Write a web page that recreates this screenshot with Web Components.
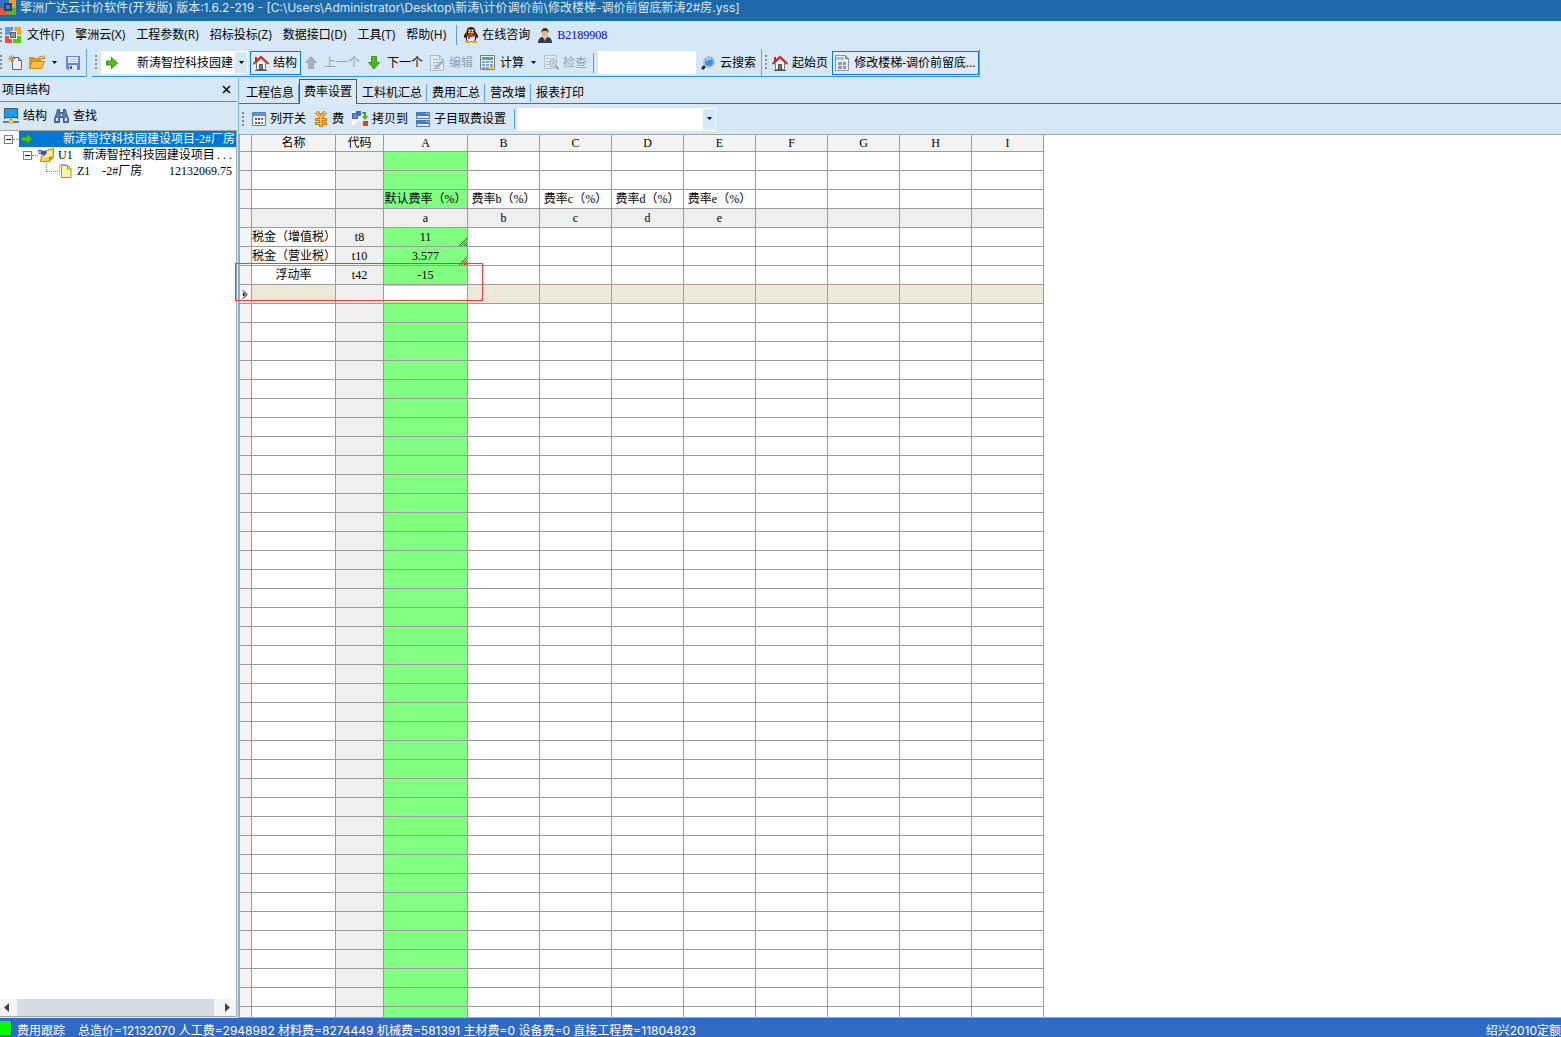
<!DOCTYPE html>
<html lang="zh-CN">
<head>
<meta charset="utf-8">
<title>擎洲广达云计价软件</title>
<style>
html,body{margin:0;height:100%;overflow:hidden}
body{font:12px/16px "Open Sans","Noto Sans CJK SC",sans-serif;color:#000;background:#d6e7f5}
</style>
</head>
<body>
<cost-app></cost-app>
<script>
const ICONS = {
  logo: [16,16,'<path fill="#fff" d="M3 3h10v10H3z"/><path fill="#5b9cf0" d="M0 0h8v4H5v4H0z"/><path fill="#f9a52c" d="M9 0h7v8h-4V4H9z"/><path fill="#e8533c" d="M0 9h4v3h3v4H0z"/><path fill="#55c41e" d="M12 9h4v7H8v-4h4z"/><path fill="#56606c" d="M5 5h6v6H5z"/><path fill="#8b939c" d="M6 6h4v4H6z"/>'],
  logoDark: [16,16,'<path fill="#2b74c9" d="M0 0h9v3H5v5H0z"/><path fill="#f39a2c" d="M9 0h7v8h-5V3H9z"/><path fill="#e8533c" d="M0 8h5v3h2v4H0z"/><path fill="#5fb31e" d="M11 8h5v7H7v-4h4z"/><path fill="#1b4674" d="M4 3h8v8H4z"/><path fill="#2f86cf" d="M6 5h4v4H6z"/>'],
  newFile: [15,16,'<path fill="#e8f0f8" stroke="#596a80" d="M4.500 2.500h6l3 3v9h-9z"/><path fill="none" stroke="#596a80" d="M10.500 2.500v3h3"/><path stroke="#f08a1c" d="M3.500 0v7M0 3.500h7M1 1l5 5M6 1L1 6"/>'],
  open: [16,16,'<path fill="#d99a1e" d="M0 2h5l1 1h6v4H3L1 14H0z"/><path fill="#fcc23f" stroke="#d08c10" d="M3.500 6.500h12l-3 7H.5z"/><path fill="none" stroke="#c47a15" d="M9.500 3c1-2 3-2 4.500-1M15.500.5v3h-3"/>'],
  save: [14,14,'<path fill="#6b85cf" d="M0 0h14v14H2l-2-2z"/><path fill="#e6edfa" d="M2 1h10v6H2z"/><path fill="#b7c6ea" d="M3 3h8v1H3zM3 5h8v1H3z"/><path fill="#dfe6f5" d="M3 9h8v5H3z"/><path fill="#3c55a5" d="M4 10h2v3H4z"/>'],
  arrowR: [12,12,'<path fill="#58bd1c" stroke="#2f8d12" d="M.5 4h5V.5l6 5.500-6 5.500V8h-5z"/>'],
  arrowD: [16,14,'<path fill="#4fb51f" stroke="#3e9a18" d="M4.500.5h5v6h3L7 13 1.500 6.500h3z"/>'],
  arrowU: [16,14,'<path fill="#a5b2bf" stroke="#9caab8" d="M4.500 12.500h5v-6h3L7 .5 1.500 6.500h3z"/>'],
  house: [16,16,'<path fill="#f6f6f6" stroke="#777" d="M3.500 7.500L8 3.500l4.500 4v7h-9z"/><path fill="#7b7f88" stroke="#4b4f58" d="M6.500 9.500h3v5h-3z"/><path fill="#b12a22" d="M2 2h2v4H2z"/><path fill="none" stroke="#c92c25" stroke-width="2" d="M.5 9L8 1.800 15.500 9"/><path stroke="#555" d="M2 15.500h12"/>'],
  edit: [15,16,'<path fill="#e3ebf2" stroke="#a9b8c6" d="M.5.5h9l4 4v11H.5z"/><path fill="none" stroke="#a9b8c6" d="M9.500.5v4h4M3 4.500h5M3 7.500h7M3 10.500h4M3 13.500h7"/><path stroke="#96a7b8" stroke-width="2" d="M13 6l-6 6"/><path stroke="#8797a8" d="M7 12l-2 1"/>'],
  calc: [16,15,'<path fill="#f3f7fb" stroke="#6d7f92" d="M.5.5h14v14H.5z"/><path fill="#58a886" d="M2 2h11v3H2z"/><path fill="#78a2dc" d="M2 6h3v2H2zM6 6h3v2H6zM10 6h3v2h-3zM2 9h3v2H2zM6 9h3v2H6zM10 9h3v2h-3zM2 12h3v2H2zM6 12h3v2H6z"/><path fill="#f0b030" d="M10 11h3v3h-3z"/>'],
  check: [15,15,'<path fill="#e1e9f0" stroke="#b4c2ce" d="M.5.5h12v13H.5z"/><path stroke="#b4c2ce" d="M2 3.500h9M2 6.500h4M2 9.500h3"/><circle cx="9" cy="8.500" r="3.500" fill="#d3dde6" stroke="#9fafbd"/><circle cx="9" cy="8.500" r="1.500" fill="#b4c2ce"/><path stroke="#93a4b4" stroke-width="2" d="M11.500 11l3 3"/>'],
  search: [15,14,'<path stroke="#222b33" stroke-width="3" d="M1 13l4-4"/><circle cx="8" cy="6" r="5" fill="#2f96e2" stroke="#b4bdc6" stroke-width="2"/><path fill="#8ed0fb" d="M4.500 5.500a3.500 3.500 0 0 1 6.500-2c-2 .2-4 .8-6.500 2z"/>'],
  doc: [15,16,'<path fill="#edf3fa" stroke="#8a94a8" d="M.5.5h10l3 3v12H.5z"/><path fill="#9cc4ee" d="M1 2h8v3H1z"/><path fill="none" stroke="#6f7690" d="M10.500.5v3h3"/><path fill="#9295b8" d="M3 7h4v3H3zM8 7h3v3H8zM3 11h4v3H3zM8 11h3v3H8z"/>'],
  qq: [16,16,'<path fill="#1c1c1e" d="M8 0c3 0 4.500 2 4.500 5 2 2 3 4 2.500 6l-1.500-1c0 3-2 5-5.500 5s-5.500-2-5.500-5L1 11c-.5-2 .5-4 2.500-6C3.500 2 5 0 8 0z"/><ellipse cx="8" cy="11" rx="4" ry="3.500" fill="#fff"/><path fill="#fff" d="M5.500 2.500h2v2h-2zM8.500 2.500h2v2h-2z"/><path fill="#f7a51b" d="M5 5h6v1.500H5zM2 14h5v2H2zM9 14h5v2H9z"/><path fill="#df2b20" d="M3 7c3 1.300 7 1.300 10 0v1.700c-2 1-4 1.200-6 1.200V12H5V9L3 8.500z"/>'],
  person: [14,15,'<path fill="#333a4a" d="M0 15c0-4 2-5.500 4-6h6c2 .5 4 2 4 6z"/><path fill="#fff" d="M5 9h4l-2 4z"/><path fill="#a04030" d="M6.500 10h1v4h-1z"/><ellipse cx="7" cy="5.500" rx="3" ry="4" fill="#ecb489"/><path fill="#51321f" d="M3.500 5C3 2 5 0 7 0s4 2 3.500 5L9 3H5z"/>'],
  monitor: [16,16,'<path fill="#4a5a6b" d="M1 0h14v11H1z"/><path fill="#1e9bf0" d="M2 1h12v8H2z"/><path fill="#b9c6d2" d="M2 10h12v1H2z"/><path fill="#6b7e90" d="M7 11h2v2H7zM0 13h16v2H0z"/><path fill="#e9b92f" d="M6 12h4v4H6z"/><path fill="#fbe28a" d="M7 13h2v2H7z"/>'],
  find: [15,14,'<path fill="#5c7ba6" stroke="#3c5680" d="M3.500.5h2v3h4v-3h2l1 4 2 5v4h-5v-5h-4v5h-5v-4l2-5z"/><path fill="#d6e7f5" d="M2 9h2v3H2zM11 9h2v3h-2zM7 5h1v2H7z"/>'],
  note: [17,14,'<path fill="#f5d45b" stroke="#b58a1b" d="M4.500 3.500l11-3v9l-4 4h-9z"/><path fill="#fff0a0" d="M6 5l8-2v4l-8 3z"/><path fill="#b1881c" d="M11 13V9h4z"/><path fill="#2857b8" d="M0 2h3l2 1h3l1 2-3 3-2-2H1z"/><path fill="#9bc2ff" d="M1 3h2v2H1z"/>'],
  pages: [13,14,'<path fill="none" stroke="#4d8dbd" stroke-dasharray="1 1" d="M7.500.5h-7v10"/><path fill="#fff7a8" stroke="#b48c1c" d="M2.500 1.500h6l3.500 3.500v8.500H2.500z"/><path fill="none" stroke="#b48c1c" d="M8.500 1.500V5H12"/>'],
  columns: [14,14,'<path fill="#f6faff" stroke="#5283c6" d="M.5.5h13v13H.5z"/><path fill="#5e91d6" d="M1 1h12v3H1z"/><path fill="#7c3fae" d="M3 6h2v2H3z"/><path fill="#2c4fba" d="M6 6h2v2H6zM6 10h2v2H6z"/><path fill="#d03b2c" d="M9 6h2v2H9zM3 10h2v2H3z"/><path fill="#3098d8" d="M9 10h2v2H9z"/>'],
  yen: [14,16,'<path fill="none" stroke="#c47818" stroke-width="4" d="M2.500 1L7 6l4.500-5M7 6v10"/><path stroke="#c47818" stroke-width="3" d="M1 8.500h12M1 12.500h12"/><path fill="none" stroke="#fbb84a" stroke-width="2" d="M2.500 1L7 6.500 11.500 1M7 6v9"/><path stroke="#fbb84a" d="M2 8.500h10M2 12.500h10"/>'],
  copyTo: [16,16,'<path fill="#fff" d="M0 0h11v10H6L0 15z"/><path fill="#3f6cd0" d="M4 0h5v5H4z"/><path fill="#5f8ce8" stroke="#2f58b8" d="M.5 2.500h5v5h-5z"/><path fill="#4aa52c" d="M10 1h4v4h2l-3 4-3-4h2V3h-2z"/><path fill="#d8432a" d="M11 10h5v5h-5z"/>'],
  panels: [14,15,'<path fill="#4a7ac6" d="M0 0h14v7H0zM0 8h14v7H0z"/><path fill="#dfe9f7" d="M1 4h12v2H1zM1 12h12v2H1z"/><path fill="#fff" d="M10 1h1v1h-1zM12 1h1v1h-1zM10 9h1v1h-1zM12 9h1v1h-1z"/>'],
  down: [7,4,'<path d="M1 0h5L3.500 3z"/>'],
  close: [9,9,'<path stroke="#000" stroke-width="1.500" d="M1 1l7 7M8 1L1 8"/>'],
  tri: [5,9,'<path fill="#444" d="M5 0v9L0 4.500z"/>'],
  triR: [5,9,'<path fill="#444" d="M0 0v9l5-4.500z"/>'],
  current: [6,9,'<path fill="none" stroke="#000" d="M1 .5l4 4-4 4M1.500 3v3l1.500-1.500z"/>'],
  hatch: [8,8,'<path stroke="currentColor" d="M0 8l8-8M2.500 8L8 2.500M5 8l3-3M7 8l1-1"/>']
};

/* Defines an element whose shadow root is stamped from one template. */
function define(name, html, setup) {
  const t = document.createElement('template');
  t.innerHTML = html;
  customElements.define(name, class extends HTMLElement {
    connectedCallback() {
      if (this.shadowRoot) return;
      this.attachShadow({mode:'open'}).append(t.content.cloneNode(true));
      if (setup) setup.call(this, this.shadowRoot);
    }
  });
}

define('ui-icon', '<style>:host{display:block;flex:none}svg{display:block}</style>', function (r) {
  const [w,h,body] = ICONS[this.getAttribute('name')];
  r.innerHTML += `<svg width="${w}" height="${h}" viewBox="0 0 ${w} ${h}" aria-hidden="true">${body}</svg>`;
});

define('ui-grip', `<style>:host{display:block;flex:none;width:2px;height:15px;background:repeating-linear-gradient(#8b8b8b 0 2px,transparent 2px 4px)}</style>`);

define('ui-sep', `<style>:host{display:block;flex:none;width:1px;height:20px;background:#5aa0d8}</style>`);

define('tool-button', `<style>
:host{display:block;flex:none}
button{all:unset;box-sizing:border-box;display:flex;align-items:center;gap:4px;height:24px;white-space:nowrap;color:#000}
:host([boxed]) button{border:1px solid #0a78d6;background:#e0ebf6;padding:0 3px 0 2px}
:host([off]) button{color:#8fa3b5}
</style><button><slot name="icon"></slot><slot></slot></button>`, function (r) {
  const b = r.querySelector('button');
  b.disabled = this.hasAttribute('off');
  if (this.hasAttribute('label')) b.setAttribute('aria-label', this.getAttribute('label'));
});

define('combo-box', `<style>
:host{display:flex;flex:none;align-items:center;box-sizing:border-box;height:23px;background:#fff;position:relative}
select{appearance:none;border:0;margin:0;background:none;font:inherit;color:#000;flex:1;min-width:0;height:23px;padding:0 14px 0 36px;border-radius:0}
.drop{display:grid;place-items:center;position:absolute;right:1px;top:1px;bottom:1px;width:12px;background:#d6e7f5;pointer-events:none}
.lead{position:absolute;left:5px}
</style><span class="lead"><slot></slot></span><select><option></option></select><span class="drop"><ui-icon name="down"></ui-icon></span>`, function (r) {
  r.querySelector('option').textContent = this.getAttribute('value') || '';
  r.querySelector('select').setAttribute('aria-label', this.getAttribute('label'));
});

define('title-bar', `<style>
:host{display:flex;gap:4px;height:21px;background:#1e6aa8;color:#dbe8f4;overflow:hidden;white-space:pre;flex:none;font-family:Inter,"Noto Sans CJK SC",sans-serif}
span{line-height:16px}
</style><ui-icon name="logoDark"></ui-icon><span>擎洲广达云计价软件(开发版) 版本:1.6.2-219 - [C:\\Users\\Administrator\\Desktop\\新涛\\计价调价前\\修改楼梯-调价前留底新涛2#房.yss]</span>`);

define('menu-bar', `<style>
:host{display:flex;align-items:center;height:28px;flex:none}
nav{display:flex;gap:11px;margin:0 10px 0 6px}
button{all:unset;white-space:nowrap}
ui-grip{margin-right:3px}
.chat{margin:0 8px 0 6px;display:flex;gap:3px;align-items:center}
.user{display:flex;gap:5px;align-items:center}
a{color:#00f;text-decoration:none;font-family:"Liberation Serif",serif}
</style><ui-grip></ui-grip><ui-icon name="logo"></ui-icon>
<nav><button>文件(F)</button><button>擎洲云(X)</button><button>工程参数(R)</button><button>招标投标(Z)</button><button>数据接口(D)</button><button>工具(T)</button><button>帮助(H)</button></nav>
<ui-sep></ui-sep><button class="chat"><ui-icon name="qq"></ui-icon>在线咨询</button>
<span class="user"><ui-icon name="person"></ui-icon><a href="#">B2189908</a></span>`);

define('tool-strip', `<style>
:host{display:flex;align-items:center;height:28px;flex:none}
.band{display:flex;align-items:center;height:28px;border-bottom:1px solid #2f8fdc;border-right:1px solid #5aa8e4;box-sizing:border-box}
.a{gap:6px;padding-right:6px}
.a .save{margin-left:2px}
.b{margin-left:5px;padding:0 5px 0 3px}
.b>*{margin-right:7px}
.b ui-grip{margin-right:4px}
.c ui-grip{margin-right:5px}
.b combo-box{width:147px;margin-right:2px}
.b .home{margin-right:3px}
.b .tight{margin-right:6px}
.b ui-sep{margin-right:4px}
input{all:unset;width:98px;height:23px;background:#fff;margin-right:5px!important}
.b .last{margin-right:0}
.c{padding-left:3px}.c .page{margin-right:4px}
</style>
<div class="band a"><ui-grip></ui-grip><tool-button label="新建"><ui-icon slot="icon" name="newFile"></ui-icon></tool-button><tool-button label="打开"><ui-icon slot="icon" name="open"></ui-icon></tool-button><ui-icon name="down"></ui-icon><tool-button class="save" label="保存"><ui-icon slot="icon" name="save"></ui-icon></tool-button></div>
<div class="band b"><ui-grip></ui-grip><combo-box label="工程" value="新涛智控科技园建"><ui-icon name="arrowR"></ui-icon></combo-box>
<tool-button class="home" boxed><ui-icon slot="icon" name="house"></ui-icon>结构</tool-button>
<tool-button off><ui-icon slot="icon" name="arrowU"></ui-icon>上一个</tool-button>
<tool-button><ui-icon slot="icon" name="arrowD"></ui-icon>下一个</tool-button>
<tool-button off><ui-icon slot="icon" name="edit"></ui-icon>编辑</tool-button>
<tool-button class="tight"><ui-icon slot="icon" name="calc"></ui-icon>计算</tool-button><ui-icon name="down"></ui-icon>
<tool-button off class="tight"><ui-icon slot="icon" name="check"></ui-icon>检查</tool-button>
<ui-sep></ui-sep><input aria-label="搜索内容"><tool-button class="last"><ui-icon slot="icon" name="search"></ui-icon>云搜索</tool-button></div>
<div class="band c"><ui-grip></ui-grip><tool-button class="page"><ui-icon slot="icon" name="house"></ui-icon>起始页</tool-button>
<tool-button boxed><ui-icon slot="icon" name="doc"></ui-icon>修改楼梯-调价前留底...</tool-button></div>`);

define('project-tree', `<style>
:host{display:flex;flex-direction:column;flex:1;min-height:0;background:#fff;border:1px solid #a9a79b;border-left:0;box-sizing:border-box;font-family:"Liberation Serif","Noto Sans CJK SC",serif}
ul{list-style:none;margin:0;padding:0;flex:1;overflow:hidden}
li{display:flex;align-items:center;height:16px;white-space:pre}
.t{flex:1;display:flex;align-items:center;height:16px;min-width:0;overflow:hidden}
.sel{background:#0078d7;color:#fff;height:16px}
.box{flex:none;width:7px;height:7px;border:1px solid #808080;background:linear-gradient(#000,#000) center/5px 1px no-repeat}
.dots{flex:none;height:0;border-top:1px dotted #888}
.elbow{flex:none;width:11px;height:8px;align-self:flex-start;border-left:1px dotted #888;border-bottom:1px dotted #888}
.bar{display:flex;align-items:center;height:17px;background:#f4f5f7;justify-content:space-between;padding:0 6px 0 4px}
.thumb{flex:1;margin:0 11px 0 8px;height:17px;background:#d6dbe4}
.num{margin-left:auto;padding-right:4px}
</style><ul>
<li style="padding-left:4px"><i class="box"></i><i class="dots" style="width:6px"></i><span class="t sel"><ui-icon name="arrowR" style="margin:0 30px 0 2px"></ui-icon>新涛智控科技园建设项目-2#厂房</span></li>
<li style="padding-left:23px"><i class="box"></i><i class="dots" style="width:6px"></i><span class="t"><ui-icon name="note" style="margin-right:3px"></ui-icon>U1<span style="margin-left:10px">新涛智控科技园建设项目</span><span class="num">. . .</span></span></li>
<li style="padding-left:46px"><i class="elbow"></i><span class="t"><ui-icon name="pages" style="margin:0 5px 0 1px"></ui-icon>Z1<span style="margin-left:12px">-2#厂房</span><span class="num">12132069.75</span></span></li>
</ul><div class="bar"><ui-icon name="tri"></ui-icon><span class="thumb"></span><ui-icon name="triR"></ui-icon></div>`);

define('side-panel', `<style>
:host{display:flex;flex-direction:column;width:237px;flex:none;box-sizing:border-box;padding-bottom:1px}
header{display:flex;align-items:center;justify-content:space-between;height:23px;padding:0 6px 0 2px;border-bottom:1px solid #808890}
header button{all:unset}
.tools{display:flex;align-items:center;gap:7px;height:28px;padding-left:3px}
</style><header>项目结构<button aria-label="关闭"><ui-icon name="close"></ui-icon></button></header>
<div class="tools"><tool-button><ui-icon slot="icon" name="monitor"></ui-icon>结构</tool-button><tool-button><ui-icon slot="icon" name="find"></ui-icon>查找</tool-button></div>
<project-tree></project-tree>`);

define('tab-strip', `<style>
:host{display:flex;height:26px;flex:none;border-bottom:1px solid #666;box-sizing:border-box;padding-left:2px}
button{all:unset;box-sizing:border-box;height:18px;line-height:16px;white-space:nowrap;margin-top:6px;padding:0 4px 0 5px;border-right:1px solid #5aa0d8}
button:first-child{border:0}
button:last-child{border:0}
.on{background:#dbe9f6;border:1px solid #555;border-bottom:0;height:25px;margin-top:1px;line-height:22px;padding:0 4px}
</style><button>工程信息</button><button class="on">费率设置</button><button>工料机汇总</button><button>费用汇总</button><button>营改增</button><button>报表打印</button>`);

define('rate-grid', `<style>
:host{display:block;flex:1;min-height:0;position:relative;border:1px solid #a9a79b;border-width:1px 0;background:#fff}
.view{height:100%;overflow:hidden}
table{table-layout:fixed;width:805px;border-left:1px solid #a9a79b;box-sizing:border-box;border-spacing:0;font:12px/14px "Liberation Serif","Noto Sans CJK SC",serif}
th,td{box-sizing:border-box;height:19px;padding:0;border-right:1px solid #9c9c9c;border-bottom:1px solid #9c9c9c;text-align:center;font-weight:400;white-space:nowrap;overflow:hidden;position:relative}
thead th{height:17px;background:#f4f4f4}
tbody th{background:#f4f4f4}
.code,.sub td{background:#efefef}
.def{background:#80ff80}
.cur td{background:#ece9d8}
.cur .code{background:#efefef}
.cur .def{background:#fff;box-shadow:inset 0 1px #80ff80,inset 0 -1px #80ff80}
tbody th ui-icon{margin-left:2px}
.hatch{position:absolute;right:0;bottom:0}
.focus{position:absolute;left:-4px;top:128px;width:246px;height:36px;border:1px solid #f03c3c;pointer-events:none}
</style><div class="view"><table><colgroup></colgroup><thead></thead><tbody></tbody></table></div><div class="focus"></div>`, function (r) {
  r.querySelector('colgroup').innerHTML = [12,84,48,84,72,72,72,72,72,72,72,72].map(w => `<col style="width:${w}px">`).join('');
  r.querySelector('thead').innerHTML = '<tr>' + ['','名称','代码',...'ABCDEFGHI'].map(t => `<th scope="col">${t}</th>`).join('') + '</tr>';
  const rows = {
    2: ['','','默认费率（%）','费率b（%）','费率c（%）','费率d（%）','费率e（%）'],
    3: ['','','a','b','c','d','e'],
    4: ['税金（增值税）','t8','11'],
    5: ['税金（营业税）','t10','3.577'],
    6: ['浮动率','t42','-15']
  };
  const marks = {4:'#146414', 5:'#d01e14'};
  let html = '';
  for (let i = 0; i < 46; i++) {
    const d = rows[i] || [];
    html += `<tr class="${i === 3 ? 'sub' : i === 7 ? 'cur' : ''}"><th>${i === 7 ? '<ui-icon name="current"></ui-icon>' : ''}</th>`;
    for (let c = 0; c < 11; c++) {
      const cls = c === 1 ? 'code' : c === 2 && i !== 3 ? 'def' : '';
      const mark = c === 2 && marks[i] ? `<ui-icon class="hatch" name="hatch" style="color:${marks[i]}"></ui-icon>` : '';
      html += `<td class="${cls}">${d[c] || ''}${mark}</td>`;
    }
    html += '</tr>';
  }
  r.querySelector('tbody').innerHTML = html;
});

define('work-area', `<style>
:host{display:flex;flex-direction:column;flex:1;min-width:0;border-left:1px solid #7eb4e6;margin-left:1px;box-sizing:border-box}
.tools{display:flex;align-items:center;gap:8px;height:30px;flex:none;padding-left:3px}
combo-box{width:199px;margin-left:-6px}
</style><tab-strip></tab-strip>
<div class="tools"><ui-grip></ui-grip><tool-button><ui-icon slot="icon" name="columns"></ui-icon>列开关</tool-button><tool-button><ui-icon slot="icon" name="yen"></ui-icon>费</tool-button><tool-button><ui-icon slot="icon" name="copyTo"></ui-icon>拷贝到</tool-button><tool-button><ui-icon slot="icon" name="panels"></ui-icon>子目取费设置</tool-button><ui-sep></ui-sep><combo-box label="费率"></combo-box></div>
<rate-grid></rate-grid>`);

define('status-bar', `<style>
:host{display:flex;height:19px;flex:none;background:#316ac5;color:#fff;white-space:pre;font-family:Inter,"Noto Sans CJK SC",sans-serif}
.led{width:11px;height:14px;margin-top:3px;background:#0f0;border-right:1px solid #000;margin-right:5px}
span{line-height:13px;padding-top:6px}
.sum{margin-left:13px}.norm{margin-left:auto}
</style><i class="led"></i><span>费用跟踪</span><span class="sum">总造价=12132070 人工费=2948982 材料费=8274449 机械费=581391 主材费=0 设备费=0 直接工程费=11804823</span><span class="norm">绍兴2010定额</span>`);

define('cost-app', `<style>
:host{display:flex;flex-direction:column;height:100vh;overflow:hidden}
main{display:flex;flex:1;min-height:0;padding-top:1px}
</style><title-bar></title-bar><menu-bar></menu-bar><tool-strip></tool-strip><main><side-panel></side-panel><work-area></work-area></main><status-bar></status-bar>`);
</script>
</body>
</html>
